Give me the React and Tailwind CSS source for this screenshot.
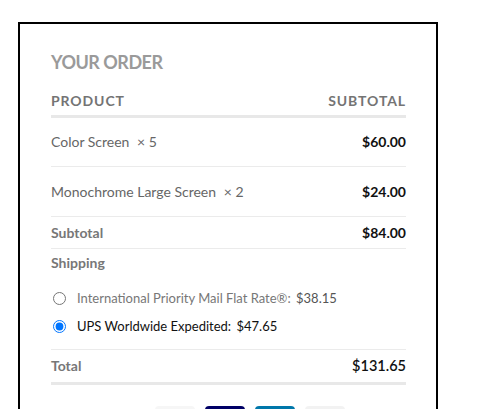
const items = [
  { name: 'Color Screen', qty: 5, price: '$60.00', h: 'h-[49px]' },
  { name: 'Monochrome Large Screen', qty: 2, price: '$24.00', h: 'h-[50px]' },
]

const payments = ['bg-[#f6f6f6]', 'bg-[#000066]', 'bg-[#0077aa]', 'bg-[#f2f2f2]']

const App = () => {
  return (
    <div className="h-[409px] overflow-hidden bg-white font-['Lato',sans-serif]">
      <div className="ml-[18px] mt-[22px] w-[420px] border-2 border-black pl-[31px] pr-[30px] pt-[26px] pb-10">
        <h3 className="text-[18px] leading-6 font-bold text-[#9a9a9a] tracking-[-0.5px]">YOUR ORDER</h3>

        <div className="mt-[17px] flex justify-between pb-1 border-b-[3px] border-[#e8e8e8] text-[14px] leading-5 font-bold tracking-[0.9px] text-[#747474]">
          <span>PRODUCT</span>
          <span>SUBTOTAL</span>
        </div>

        {items.map((item, index) => (
          <div key={index} className={`${item.h} flex items-center justify-between border-b border-[#ebebeb] text-sm`}>
            <span className="text-[#666]">
              {item.name} <span className="ml-1">× {item.qty}</span>
            </span>
            <span className="font-bold text-[#111]">{item.price}</span>
          </div>
        ))}

        <div className="h-[32px] flex items-center justify-between border-b border-[#ebebeb] text-sm">
          <span className="font-bold text-[#777]">Subtotal</span>
          <span className="font-bold text-[#111]">$84.00</span>
        </div>

        <div className="border-b border-[#ebebeb] pb-[9px] text-sm">
          <div className="h-[28px] flex items-center font-bold text-[#777]">Shipping</div>
          <div className="mt-[7px] text-[13px]">
            <label className="h-[28px] flex items-center text-[#777]">
              <input type="radio" name="ship" className="m-0 ml-[2px] mr-[11px]" />
              <span>
                International Priority Mail Flat Rate®: <span className="ml-0.5 text-[#555]">$38.15</span>
              </span>
            </label>
            <label className="h-[28px] flex items-center text-[#111]">
              <input type="radio" name="ship" defaultChecked className="m-0 ml-[2px] mr-[11px]" />
              <span>
                UPS Worldwide Expedited: <span className="ml-0.5">$47.65</span>
              </span>
            </label>
          </div>
        </div>

        <div className="h-[35px] flex items-center justify-between border-b-[3px] border-[#e8e8e8] text-sm">
          <span className="font-bold text-[#777]">Total</span>
          <span className="text-[14.5px] font-semibold text-[#111]">$131.65</span>
        </div>

        <div className="mt-[21px] ml-[104px] flex gap-[10px]">
          {payments.map((color, index) => (
            <div key={index} className={`${color} w-10 h-6 rounded-sm`} />
          ))}
        </div>
      </div>
    </div>
  )
}

export default App
